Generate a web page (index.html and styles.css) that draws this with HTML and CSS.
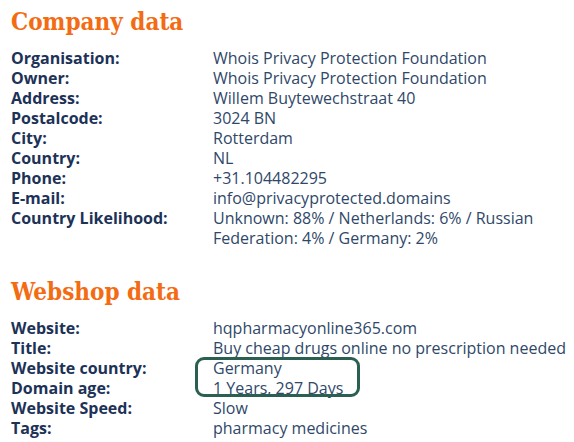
FILE: index.html
```html
<!DOCTYPE html>
<html>
<head>
<meta charset="utf-8">
<link rel="stylesheet" href="styles.css">
</head>
<body>
<section class="block">
  <h2 class="title">Company data</h2>
  <div class="data">
    <div class="label">Organisation:</div><div class="value">Whois Privacy Protection Foundation</div>
    <div class="label">Owner:</div><div class="value">Whois Privacy Protection Foundation</div>
    <div class="label">Address:</div><div class="value">Willem Buytewechstraat 40</div>
    <div class="label">Postalcode:</div><div class="value">3024 BN</div>
    <div class="label">City:</div><div class="value">Rotterdam</div>
    <div class="label">Country:</div><div class="value">NL</div>
    <div class="label">Phone:</div><div class="value">+31.104482295</div>
    <div class="label">E-mail:</div><div class="value">info@privacyprotected.domains</div>
    <div class="label">Country Likelihood:</div><div class="value">Unknown: 88% / Netherlands: 6% / Russian Federation: 4% / Germany: 2%</div>
  </div>
</section>
<section class="block second">
  <h2 class="title">Webshop data</h2>
  <div class="data">
    <div class="label">Website:</div><div class="value">hqpharmacyonline365.com</div>
    <div class="label">Title:</div><div class="value nowrap">Buy cheap drugs online no prescription needed</div>
    <div class="label">Website country:</div><div class="value highlight">Germany<span class="mark"></span></div>
    <div class="label">Domain age:</div><div class="value">1 Years, 297 Days</div>
    <div class="label">Website Speed:</div><div class="value">Slow</div>
    <div class="label">Tags:</div><div class="value">pharmacy medicines</div>
  </div>
</section>
</body>
</html>
```
FILE: styles.css
```css
html, body {
  margin: 0;
  padding: 0;
  background: #ffffff;
}
body {
  padding: 0 0 0 11px;
  font-family: "Open Sans", sans-serif;
  font-size: 16px;
  line-height: 20px;
}
.block {
  margin: 0;
}
.title {
  margin: 0;
  padding-top: 6px;
  height: 42px;
  font-family: "DejaVu Serif Condensed", "DejaVu Serif", serif;
  font-stretch: condensed;
  font-weight: bold;
  font-size: 24px;
  line-height: 32px;
  color: #f36b12;
}
.second {
  margin-top: 22px;
}
.data {
  display: grid;
  grid-template-columns: 202px 1fr;
}
.label {
  font-weight: bold;
  color: #1c3257;
}
.value {
  color: #2f4869;
}
.nowrap {
  white-space: nowrap;
}
.highlight {
  position: relative;
}
.mark {
  position: absolute;
  left: -18px;
  top: -1px;
  width: 159px;
  height: 34px;
  border: 3px solid #2b5f52;
  border-radius: 9px;
}
```
